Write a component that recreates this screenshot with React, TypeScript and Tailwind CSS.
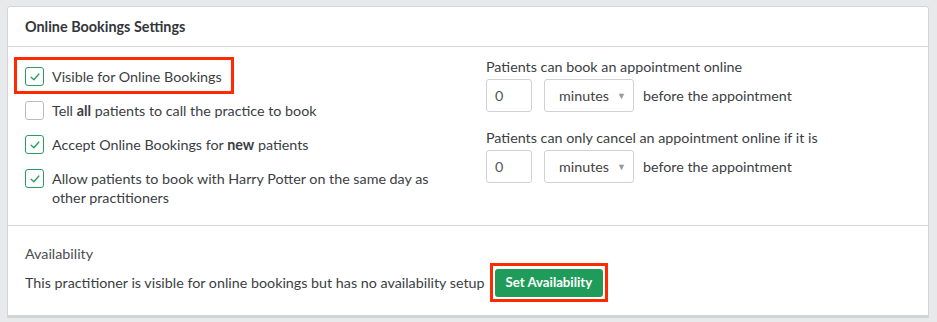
import React from 'react';

function Check() {
  return (
    <svg viewBox="0 0 18 18" className="w-[10px] h-[10px]">
      <path d="M2 9.5 L7 14 L16 3.5" fill="none" stroke="#2a9d5c" strokeWidth="2.4" strokeLinecap="round" strokeLinejoin="round" />
    </svg>
  );
}

function Box({ checked }: { checked: boolean }) {
  return (
    <span
      className={`shrink-0 w-[19px] h-[19px] rounded-[3px] border flex items-center justify-center bg-white ${
        checked ? 'border-[#2a9d5c]' : 'border-[#b9bbbe]'
      }`}
    >
      {checked && <Check />}
    </span>
  );
}

function Row({ checked, children, highlight }: { checked: boolean; children: React.ReactNode; highlight?: boolean }) {
  return (
    <div className="relative flex items-start gap-[8px]">
      <Box checked={checked} />
      <span className="leading-[19px] mt-[-0.5px]">{children}</span>
      {highlight && (
        <span className="absolute left-[-11px] top-[-10px] w-[220px] h-[37px] border-[3px] border-[#ff2a00] pointer-events-none" />
      )}
    </div>
  );
}

function Delay({ label }: { label: string }) {
  return (
    <div>
      <div className="leading-[20px]">{label}</div>
      <div className="mt-[2px] flex items-center">
        <div className="w-[46px] h-[33px] border border-[#cfd1d4] rounded-[3px] flex items-center pl-[8px] text-[#555]">0</div>
        <div className="ml-[12px] w-[90px] h-[33px] border border-[#cfd1d4] rounded-[3px] flex items-center pl-[14px] text-[#444]">
          <span>minutes</span>
          <span className="ml-[8px] text-[9px] text-[#999]">▼</span>
        </div>
        <span className="ml-[9px]">before the appointment</span>
      </div>
    </div>
  );
}

export default function App() {
  return (
    <div
      className="w-[937px] h-[322px] bg-[#e8e9eb] pt-[6px] pl-[7px] pr-[8px] text-[14.3px] text-[#3b3e43]"
      style={{ fontFamily: 'Lato, "Open Sans", sans-serif' }}
    >
      <div className="bg-white border border-[#d4d5d8] rounded-t-[3px] shadow-[0_2px_0_#d2d3d6]">
        <div className="h-[40px] flex items-center px-[17px] border-b border-[#d4d5d8]">
          <h2 className="font-bold text-[14.4px] text-[#33363b]">Online Bookings Settings</h2>
        </div>

        <div className="flex pb-[18px] border-b border-[#d4d5d8]">
          <div className="w-[478px] pl-[17px] pt-[20px] flex flex-col gap-[15px]">
            <Row checked highlight>Visible for Online Bookings</Row>
            <Row checked={false}>
              Tell <b>all</b> patients to call the practice to book
            </Row>
            <Row checked>
              Accept Online Bookings for <b>new</b> patients
            </Row>
            <Row checked>
              Allow patients to book with Harry Potter on the same day as
              <br />
              other practitioners
            </Row>
          </div>
          <div className="pt-[10px] flex flex-col gap-[16px]">
            <Delay label="Patients can book an appointment online" />
            <Delay label="Patients can only cancel an appointment online if it is" />
          </div>
        </div>

        <div className="px-[17px] pt-[18px] pb-[18px]">
          <div className="leading-[20px] text-[#4a4d52]">Availability</div>
          <div className="mt-[5px] flex items-center">
            <span>This practitioner is visible for online bookings but has no availability setup</span>
            <span className="relative ml-[10px]">
              <button className="h-[28px] px-[11px] rounded-[3px] bg-[#209c5a] text-white font-bold text-[13.2px]">
                Set Availability
              </button>
              <span className="absolute left-[-5px] top-[-6px] right-[-5px] bottom-[-5px] border-[3px] border-[#ff2a00] pointer-events-none" />
            </span>
          </div>
        </div>
      </div>
    </div>
  );
}
